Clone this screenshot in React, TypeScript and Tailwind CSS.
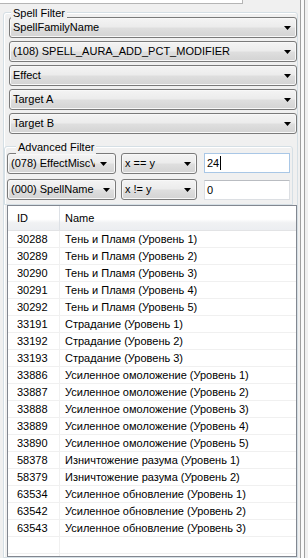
import React from "react";

const rows: [string, string][] = [
  ["30288", "Тень и Пламя (Уровень 1)"],
  ["30289", "Тень и Пламя (Уровень 2)"],
  ["30290", "Тень и Пламя (Уровень 3)"],
  ["30291", "Тень и Пламя (Уровень 4)"],
  ["30292", "Тень и Пламя (Уровень 5)"],
  ["33191", "Страдание (Уровень 1)"],
  ["33192", "Страдание (Уровень 2)"],
  ["33193", "Страдание (Уровень 3)"],
  ["33886", "Усиленное омоложение (Уровень 1)"],
  ["33887", "Усиленное омоложение (Уровень 2)"],
  ["33888", "Усиленное омоложение (Уровень 3)"],
  ["33889", "Усиленное омоложение (Уровень 4)"],
  ["33890", "Усиленное омоложение (Уровень 5)"],
  ["58378", "Изничтожение разума (Уровень 1)"],
  ["58379", "Изничтожение разума (Уровень 2)"],
  ["63534", "Усиленное обновление (Уровень 1)"],
  ["63542", "Усиленное обновление (Уровень 2)"],
  ["63543", "Усиленное обновление (Уровень 3)"],
  ["", ""],
  ["", ""],
];

function Arrow() {
  return (
    <svg width="7" height="4" viewBox="0 0 7 4" className="shrink-0">
      <path d="M0 0H7L3.5 4Z" fill="#000" />
    </svg>
  );
}

function Combo({ text, className }: { text: string; className: string }) {
  return (
    <div
      className={
        "h-[21px] rounded-[3px] border border-[#7a7a7a] shadow-[inset_0_0_0_1px_#f8f8f8] bg-[linear-gradient(to_bottom,#f4f4f4_0%,#ececec_45%,#dedede_55%,#d3d3d3_100%)] flex items-center " +
        className
      }
    >
      <div className="flex-1 min-w-0 overflow-hidden whitespace-nowrap pl-[3px]">{text}</div>
      <div className="w-[17px] flex justify-center">
        <Arrow />
      </div>
    </div>
  );
}

export default function App() {
  return (
    <div className="w-[308px] h-[558px] bg-[#f0f0f0] flex overflow-hidden text-[11px] leading-[13px] text-black font-['Liberation_Sans',Arial,sans-serif]">
      <div className="w-[298px] h-full flex flex-col">
        <div className="h-[4px] shrink-0">
          <div className="w-[243px] h-[4px] bg-white border-b border-r border-[#b5b5b5]" />
        </div>
        {/* Spell Filter group */}
        <div className="mt-[8px] ml-[3px] w-[295px] flex-1 min-h-0 relative border border-[#d5dfe5] rounded-t-[3px] shadow-[inset_1px_1px_0_#ffffff] flex flex-col">
          <div className="absolute left-[7px] top-[-6px] px-[2px] bg-[#f0f0f0]">Spell Filter</div>
          <div className="flex flex-col gap-[3px] pl-[5px] pt-[4px]">
            <Combo text="SpellFamilyName" className="" />
            <Combo text="(108) SPELL_AURA_ADD_PCT_MODIFIER" className="" />
            <Combo text="Effect" className="" />
            <Combo text="Target A" className="" />
            <Combo text="Target B" className="" />
          </div>
          {/* Advanced Filter group */}
          <div className="mt-[12px] w-[289px] relative border border-[#d5dfe5] rounded-t-[3px] shadow-[inset_1px_1px_0_#ffffff] pl-[2px] pt-[6px] pb-[4px] flex flex-col gap-[5px]">
            <div className="absolute left-[11px] top-[-6px] px-[2px] bg-[#f0f0f0]">Advanced Filter</div>
            <div className="flex items-start">
              <Combo text="(078) EffectMiscValue" className="w-[109px] [&>div:first-child]:max-w-[87px]" />
              <Combo text="x == y" className="ml-[5px] w-[76px]" />
              <div className="ml-[7px] w-[86px] h-[20px] bg-white border border-[#a9c7e6] flex items-center pl-[2px]">
                <span>24</span>
                <span className="w-[1px] h-[14px] bg-black ml-[1px]" />
              </div>
            </div>
            <div className="flex items-start">
              <Combo text="(000) SpellName" className="w-[109px]" />
              <Combo text="x != y" className="ml-[5px] w-[76px]" />
              <div className="ml-[7px] mt-[1px] w-[86px] h-[20px] bg-white border border-[#dcdfe3] border-t-[#b9bcc1] flex items-center pl-[2px]">
                <span>0</span>
              </div>
            </div>
          </div>
          {/* List view */}
          <div className="ml-[3px] w-[290px] flex-1 min-h-0 border border-[#828790] bg-white overflow-hidden flex flex-col">
            <div className="h-[25px] shrink-0 flex bg-[linear-gradient(to_bottom,#ffffff_0%,#ffffff_55%,#f0f1f3_70%,#eceef1_100%)] border-b border-[#e2e3e5]">
              <div className="w-[52px] border-r border-[#dde1e6] pl-[9px] flex items-center">ID</div>
              <div className="flex-1 pl-[5px] flex items-center">Name</div>
            </div>
            {rows.map(([id, name], i) => (
              <div key={i} className="h-[17px] shrink-0 flex border-b border-[#f0f0f0]">
                <div className="w-[52px] border-r border-[#f0f0f0] pl-[9px] flex items-center">{id}</div>
                <div className="flex-1 pl-[5px] flex items-center whitespace-nowrap">{name}</div>
              </div>
            ))}
          </div>
        </div>
      </div>
      <div className="flex-1 h-full flex">
        <div className="w-[2px] h-full" />
        <div className="w-[1px] h-full bg-[#a0a0a0]" />
        <div className="w-[3px] h-full bg-[#fafafa]" />
        <div className="w-[1px] h-full bg-[#a0a0a0]" />
        <div className="flex-1 h-full" />
      </div>
    </div>
  );
}
